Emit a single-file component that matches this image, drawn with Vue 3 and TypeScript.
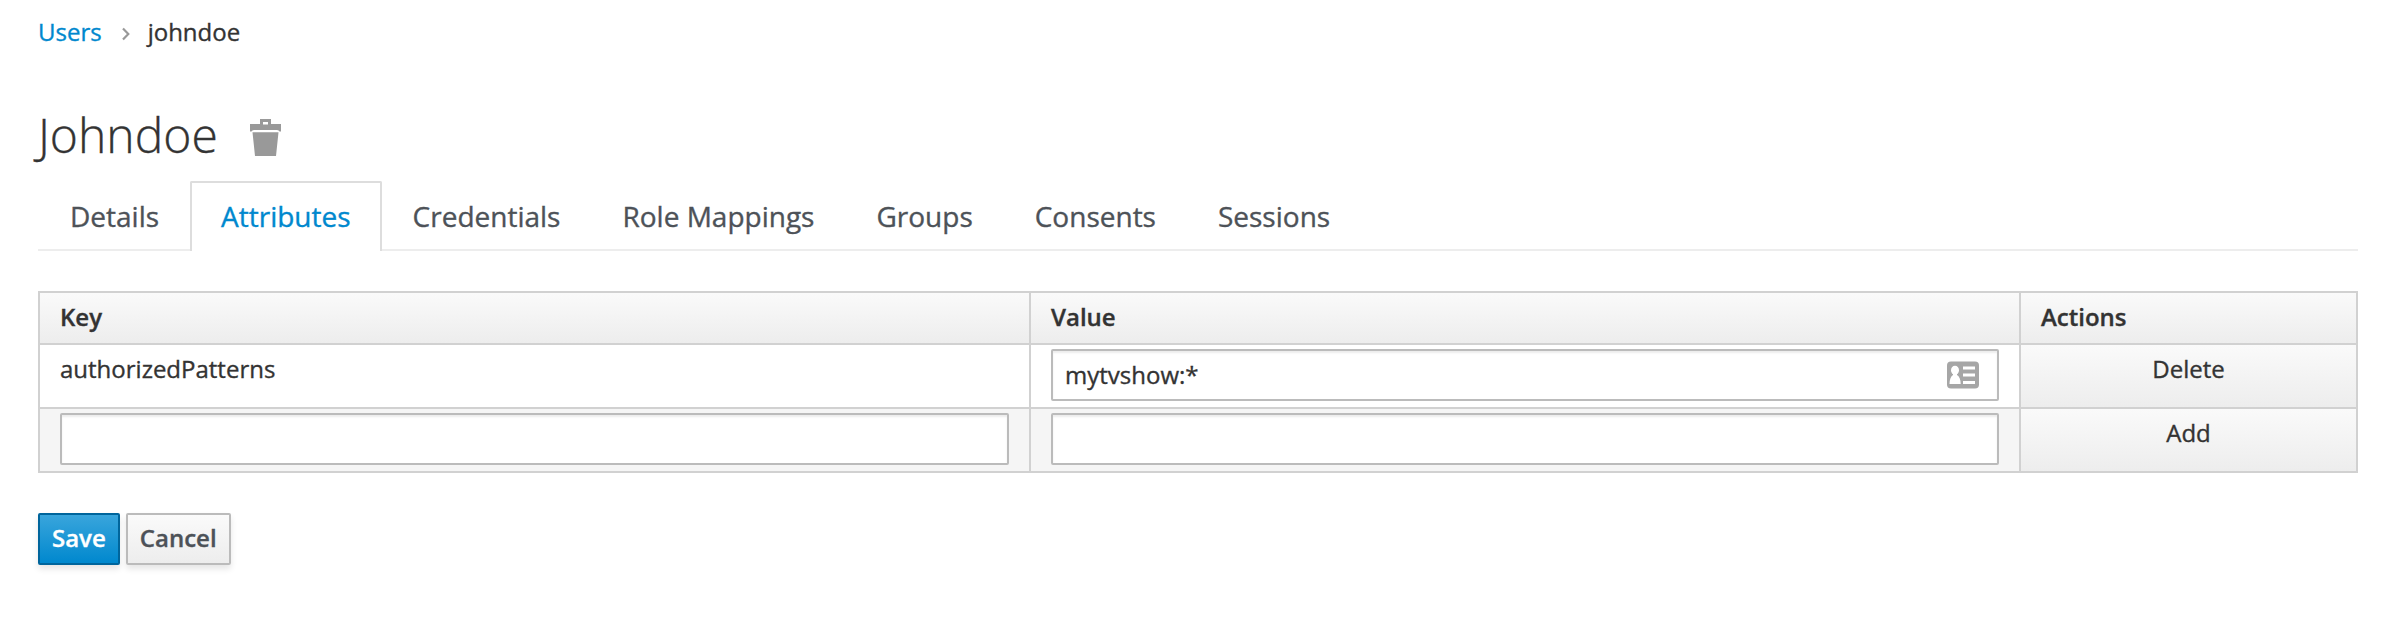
<script setup lang="ts">
import { ref } from 'vue'

interface Attribute {
  key: string
  value: string
}

const tabs: string[] = ['Details', 'Attributes', 'Credentials', 'Role Mappings', 'Groups', 'Consents', 'Sessions']
const activeTab = ref('Attributes')
const attributes = ref<Attribute[]>([{ key: 'authorizedPatterns', value: 'mytvshow:*' }])
const draft = ref<Attribute>({ key: '', value: '' })

function remove(index: number): void {
  attributes.value.splice(index, 1)
}

function add(): void {
  if (!draft.value.key) return
  attributes.value.push({ ...draft.value })
  draft.value = { key: '', value: '' }
}
</script>

<template>
  <main class="page">
    <nav class="breadcrumb">
      <a class="link">Users</a>
      <svg class="chevron" width="8" height="14" viewBox="0 0 8 14">
        <path d="M1 1.5 6.3 7 1 12.5" fill="none" stroke="#999" stroke-width="2.2" />
      </svg>
      <span>johndoe</span>
    </nav>

    <header class="heading">
      <h1>Johndoe</h1>
      <svg class="trash" width="31" height="37" viewBox="0 0 31 37">
        <path
          fill="#999"
          fill-rule="evenodd"
          d="M10 0H21V5H31V12.5H29.5Q29 11 27 11H4Q2 11 1.5 12.5H0V5H10ZM13 3V5.5H18V3ZM2.5 13.3H28.5L26 37H5Z"
        />
      </svg>
    </header>

    <ul class="tabs">
      <li v-for="tab in tabs" :key="tab" class="tab" :class="{ active: tab === activeTab }" @click="activeTab = tab">
        {{ tab }}
      </li>
    </ul>

    <section class="table">
      <div class="head">Key</div>
      <div class="head">Value</div>
      <div class="head">Actions</div>

      <template v-for="(item, index) in attributes" :key="item.key">
        <div class="cell label">{{ item.key }}</div>
        <div class="cell">
          <div class="field">
            <input v-model="item.value" type="text" />
            <svg class="card" width="32" height="28" viewBox="0 0 32 28">
              <rect y="0.5" width="32" height="27" rx="4" fill="#a6a6a6" />
              <ellipse cx="8" cy="9.3" rx="4" ry="4.5" fill="#fff" />
              <path d="M6 12H10V14Q13.5 16 13.7 23H2.5Q2.7 16 6 14Z" fill="#fff" />
              <path d="M16 5.5H28V8.5H16ZM16 12.5H28V15.5H16ZM16 20H28V23H16Z" fill="#fff" />
            </svg>
          </div>
        </div>
        <div class="action" @click="remove(index)">Delete</div>
      </template>

      <div class="cell draft">
        <div class="field"><input v-model="draft.key" type="text" /></div>
      </div>
      <div class="cell draft">
        <div class="field"><input v-model="draft.value" type="text" /></div>
      </div>
      <div class="action" @click="add">Add</div>
    </section>

    <footer class="buttons">
      <button class="btn primary">Save</button>
      <button class="btn">Cancel</button>
    </footer>
  </main>
</template>

<style>
body {
  background: #fff;
}
</style>

<style scoped>
* {
  box-sizing: border-box;
}
.page {
  height: 618px;
  padding: 16px 36px 0 38px;
  overflow: hidden;
  color: #333;
  font: 24px/32px 'Open Sans', sans-serif;
  -webkit-text-stroke: 0.35px;
}
.breadcrumb {
  display: flex;
  align-items: center;
  height: 32px;
}
.link {
  color: #0088ce;
}
.chevron {
  margin: 3px 18px 0 20px;
}
.heading {
  display: flex;
  align-items: center;
  height: 53px;
  margin-top: 60px;
}
h1 {
  margin: 0;
  font-size: 48px;
  font-weight: 300;
  line-height: 53px;
}
.trash {
  margin: 6px 0 0 32px;
}
.tabs {
  display: flex;
  height: 70px;
  margin: 20px 0 0;
  padding: 0 0 0 1px;
  list-style: none;
  border-bottom: 2px solid #ededed;
}
.tab {
  height: 70px;
  padding: 0 29px;
  border: 2px solid transparent;
  border-bottom: 0;
  color: #4d5258;
  font-size: 28px;
  line-height: 66px;
}
.tab.active {
  border-color: #ddd;
  border-radius: 2px 2px 0 0;
  background: #fff;
  color: #0088ce;
}
.table {
  display: grid;
  grid-template-columns: 989fr 988fr 335fr;
  grid-template-rows: 50px;
  grid-auto-rows: 62px;
  gap: 2px;
  margin-top: 40px;
  border: 2px solid #d1d1d1;
  background: #d1d1d1;
}
.head {
  padding: 0 20px;
  background: linear-gradient(#fafafa, #ededed);
  font-weight: 600;
  line-height: 47px;
}
.cell {
  padding: 4px 20px 0;
  background: #fff;
}
.label {
  line-height: 39px;
}
.draft {
  background: #f5f5f5;
}
.field {
  display: flex;
  align-items: center;
  height: 52px;
  padding: 0 18px 0 12px;
  border: 2px solid #bbb;
  border-radius: 2px;
  background: #fff;
  box-shadow: inset 0 2px 2px rgba(3, 3, 3, 0.075);
}
input {
  flex: 1;
  min-width: 0;
  padding: 0;
  border: 0;
  outline: 0;
  background: transparent;
  color: #333;
  font: inherit;
}
.action {
  background: linear-gradient(#fafafa, #ededed);
  line-height: 47px;
  text-align: center;
}
.buttons {
  display: flex;
  gap: 6px;
  margin-top: 40px;
}
.btn {
  height: 52px;
  padding: 0 12px 2px;
  border: 2px solid #bbb;
  border-radius: 2px;
  background: linear-gradient(#fafafa, #ededed);
  box-shadow: 0 4px 6px rgba(3, 3, 3, 0.1);
  color: #4d5258;
  font: 600 24px/46px 'Open Sans', sans-serif;
}
.primary {
  border-color: #00659c;
  background: linear-gradient(#39a5dc, #0088ce);
  color: #fff;
}
</style>
